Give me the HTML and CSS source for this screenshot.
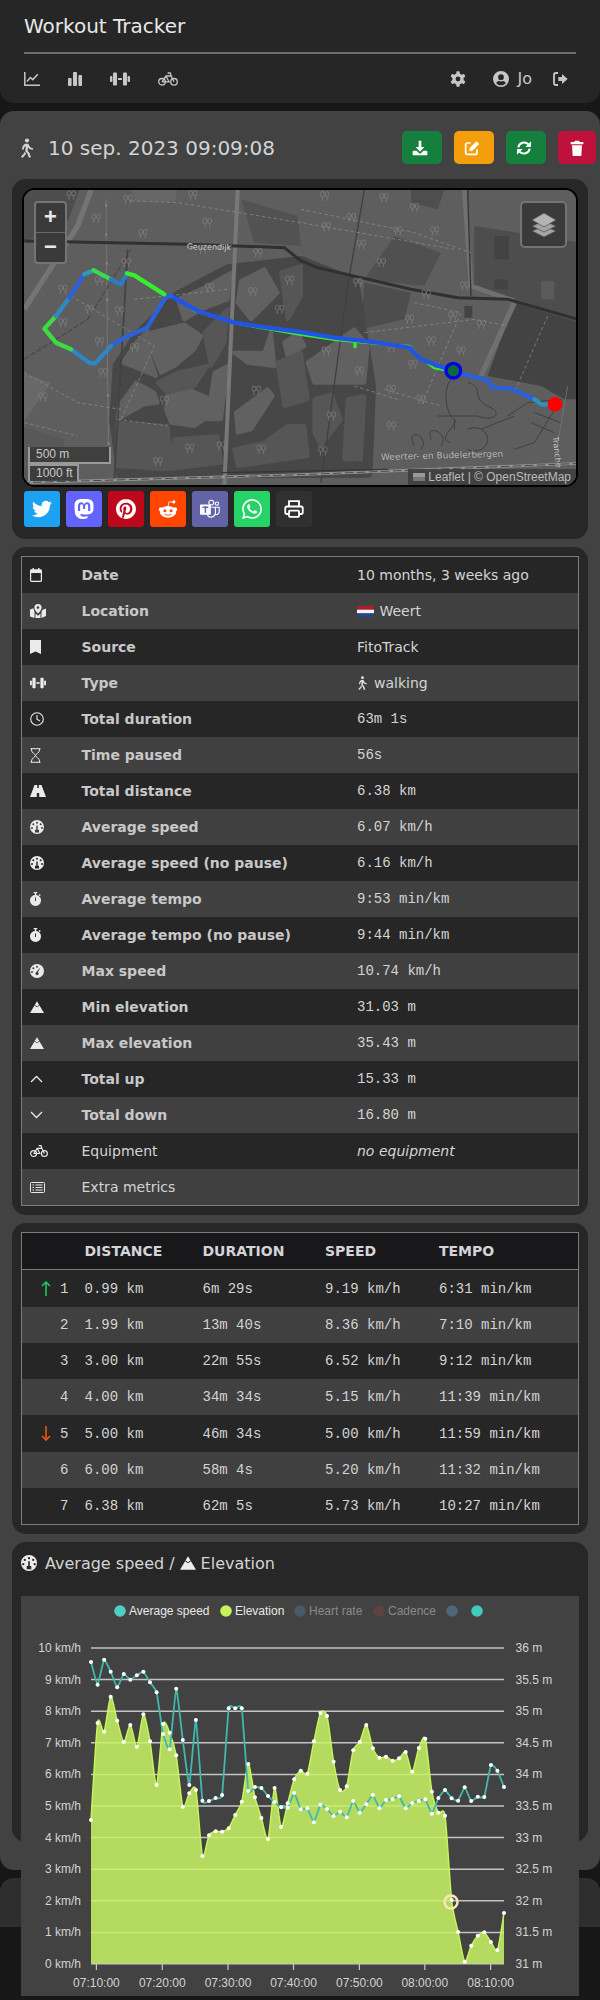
FILE: index.html
```html
<!DOCTYPE html>
<html lang="en">
<head>
<meta charset="utf-8">
<title>Workout Tracker</title>
<link rel="stylesheet" href="styles.css">
</head>
<body>
<svg class="sprite" aria-hidden="true">
  <symbol id="i-chart" viewBox="0 0 16 14"><path d="M.8 0v13.2H16" fill="none" stroke="currentColor" stroke-width="1.5"/><path d="M3 9.5 6.3 5.5 8.8 7.6 13.8 2.2" fill="none" stroke="currentColor" stroke-width="1.5"/></symbol>
  <symbol id="i-bars" viewBox="0 0 14 14"><rect y="6" width="3.6" height="8" rx="1" fill="currentColor"/><rect x="5" width="4" height="14" rx="1" fill="currentColor"/><rect x="10.4" y="3" width="3.6" height="11" rx="1" fill="currentColor"/></symbol>
  <symbol id="i-dumbbell" viewBox="0 0 20 14"><rect y="4" width="2.4" height="6" rx="1" fill="currentColor"/><rect x="3" y=".5" width="4" height="13" rx="1" fill="currentColor"/><rect x="8" y="6" width="4" height="2" fill="currentColor"/><rect x="13" y=".5" width="4" height="13" rx="1" fill="currentColor"/><rect x="17.6" y="4" width="2.4" height="6" rx="1" fill="currentColor"/></symbol>
  <symbol id="i-bike" viewBox="0 0 20 14"><g fill="none" stroke="currentColor" stroke-width="1.3"><circle cx="4" cy="9.8" r="3.3"/><circle cx="16" cy="9.8" r="3.3"/><path d="M4 9.8 8 4H13.2L16 9.8M8 4l3 5.8H4M13.2 4 12.2 1H9.6"/></g></symbol>
  <symbol id="i-gear" viewBox="0 0 24 24"><g fill="currentColor"><path fill-rule="evenodd" d="M12 3.5a8.5 8.5 0 1 0 0 17a8.5 8.5 0 1 0 0-17zM12 8.4a3.6 3.6 0 1 1 0 7.2a3.6 3.6 0 1 1 0-7.2z"/><rect x="9.5" y=".5" width="5" height="5" rx="1"/><rect x="9.5" y=".5" width="5" height="5" rx="1" transform="rotate(60 12 12)"/><rect x="9.5" y=".5" width="5" height="5" rx="1" transform="rotate(120 12 12)"/><rect x="9.5" y=".5" width="5" height="5" rx="1" transform="rotate(180 12 12)"/><rect x="9.5" y=".5" width="5" height="5" rx="1" transform="rotate(240 12 12)"/><rect x="9.5" y=".5" width="5" height="5" rx="1" transform="rotate(300 12 12)"/></g></symbol>
  <symbol id="i-user" viewBox="0 0 24 24"><path fill="currentColor" fill-rule="evenodd" d="M12 0a12 12 0 1 0 0 24a12 12 0 1 0 0-24zM12 5a4.3 4.3 0 1 1 0 8.6a4.3 4.3 0 1 1 0-8.6zM12 21.5c-3 0-5.6-1.4-7.3-3.5c.9-1.7 2.7-2.9 4.7-2.9c.6.2 1.6.5 2.6.5s2-.3 2.6-.5c2 0 3.8 1.2 4.7 2.9c-1.7 2.1-4.3 3.5-7.3 3.5z"/></symbol>
  <symbol id="i-logout" viewBox="0 0 24 24"><path d="M9 3H5.500A2.500 2.500 0 0 0 3 5.500V18.500A2.500 2.500 0 0 0 5.500 21H9" fill="none" stroke="currentColor" stroke-width="2.800"/><path fill="currentColor" d="M9.500 9H15V4.500L23.500 12 15 19.500V15H9.500Z"/></symbol>
  <symbol id="i-walk" viewBox="5 0 16 24"><g fill="currentColor"><circle cx="13" cy="3" r="2.500"/><path d="M10.500 6.800 14.500 7 17 11 20.500 12.500 19.600 14.400 15.600 12.800 14.600 11 13.600 15 16 18 17.800 23 15.300 23.800 13.600 19 10.800 15.800 11.800 10 9.800 11 8.800 14.200 6.800 13.600 8 9.300Z"/><path d="M10.200 16.500 12 18.500 10.800 20.500 7.500 24 5.800 22.300 9 19Z"/></g></symbol>
  <symbol id="i-download" viewBox="0 0 24 24"><g fill="currentColor"><path d="M10 1H14V10.500H18.500L12 17.500 5.500 10.500H10Z"/><path d="M2.500 16H7L11 20.300H13L17 16H21.500C22.500 16 23 16.800 23 17.500V22C23 22.800 22.500 23 21.500 23H2.500C1.500 23 1 22.800 1 22V17.500C1 16.800 1.500 16 2.500 16Z"/></g></symbol>
  <symbol id="i-edit" viewBox="0 0 24 24"><path d="M10 4.500H5A2.500 2.500 0 0 0 2.500 7V19A2.500 2.500 0 0 0 5 21.500H17A2.500 2.500 0 0 0 19.500 19V14" fill="none" stroke="currentColor" stroke-width="2.600"/><path fill="currentColor" d="M8.500 12 18.800 1.700 23 5.900 12.700 16.200 8 16.800Z"/></symbol>
  <symbol id="i-refresh" viewBox="0 0 24 24"><g fill="none" stroke="currentColor" stroke-width="3"><path d="M3.500 11A8.700 8.700 0 0 1 18.500 6.500"/><path d="M20.500 13A8.700 8.700 0 0 1 5.500 17.500"/></g><path fill="currentColor" d="M22.500 2V10.500H14Z"/><path fill="currentColor" d="M1.500 22V13.500H10Z"/></symbol>
  <symbol id="i-trash" viewBox="0 0 24 24"><g fill="currentColor"><path d="M2.500 3H8L9 1H15L16 3H21.500V6.500H2.500Z"/><path d="M4.500 8H19.500L18.500 24H5.500Z"/></g></symbol>
  <symbol id="i-twitter" viewBox="0 0 24 24"><path fill="currentColor" d="M23.953 4.570a10 10 0 01-2.825.775 4.958 4.958 0 002.163-2.723c-.951.555-2.005.959-3.127 1.184a4.920 4.920 0 00-8.384 4.482C7.690 8.095 4.067 6.130 1.640 3.162a4.822 4.822 0 00-.666 2.475c0 1.710.870 3.213 2.188 4.096a4.904 4.904 0 01-2.228-.616v.060a4.923 4.923 0 003.946 4.827 4.996 4.996 0 01-2.212.085 4.936 4.936 0 004.604 3.417 9.867 9.867 0 01-6.102 2.105c-.390 0-.779-.023-1.170-.067a13.995 13.995 0 007.557 2.209c9.053 0 13.998-7.496 13.998-13.985 0-.210 0-.420-.015-.630A9.935 9.935 0 0024 4.590z"/></symbol>
  <symbol id="i-mastodon" viewBox="0 0 24 24"><path fill="currentColor" d="M23.268 5.313c-.350-2.578-2.617-4.610-5.304-5.004C17.510.242 15.792 0 11.813 0h-.030C7.803 0 6.950.242 6.494.309 3.878.692 1.500 2.518.926 5.127.650 6.412.620 7.837.673 9.143c.074 1.874.088 3.745.260 5.611.118 1.240.325 2.470.620 3.680.550 2.237 2.777 4.098 4.960 4.857 2.336.792 4.849.923 7.256.380.265-.061.527-.132.786-.213.585-.184 1.270-.390 1.774-.753a.057.057 0 0 0 .023-.043v-1.809a.052.052 0 0 0-.020-.041.053.053 0 0 0-.046-.010 20.282 20.282 0 0 1-4.709.545c-2.730 0-3.463-1.284-3.674-1.818a5.593 5.593 0 0 1-.319-1.433.053.053 0 0 1 .066-.054c1.517.363 3.072.546 4.632.546.376 0 .750 0 1.125-.010 1.570-.044 3.224-.124 4.768-.422.038-.008.077-.015.110-.024 2.435-.464 4.753-1.920 4.989-5.604.008-.145.030-1.520.030-1.670.002-.512.167-3.630-.024-5.545zm-3.748 9.195h-2.561V8.290c0-1.309-.550-1.976-1.670-1.976-1.230 0-1.846.790-1.846 2.350v3.403h-2.546V8.663c0-1.560-.617-2.350-1.848-2.350-1.112 0-1.668.668-1.670 1.977v6.218H4.822V8.102c0-1.310.337-2.350 1.011-3.120.696-.770 1.608-1.164 2.740-1.164 1.311 0 2.302.500 2.962 1.498l.638 1.060.638-1.060c.660-.999 1.650-1.498 2.960-1.498 1.130 0 2.043.395 2.740 1.164.675.770 1.012 1.810 1.012 3.120z"/></symbol>
  <symbol id="i-pinterest" viewBox="0 0 24 24"><path fill="currentColor" d="M12.017 0C5.396 0 .029 5.367.029 11.987c0 5.079 3.158 9.417 7.618 11.162-.105-.949-.199-2.403.041-3.439.219-.937 1.406-5.957 1.406-5.957s-.359-.720-.359-1.781c0-1.663.967-2.911 2.168-2.911 1.024 0 1.518.769 1.518 1.688 0 1.029-.653 2.567-.992 3.992-.285 1.193.600 2.165 1.775 2.165 2.128 0 3.768-2.245 3.768-5.487 0-2.861-2.063-4.869-5.008-4.869-3.410 0-5.409 2.562-5.409 5.199 0 1.033.394 2.143.889 2.741.099.120.112.225.085.345-.090.375-.293 1.199-.334 1.363-.053.225-.172.271-.401.165-1.495-.690-2.433-2.878-2.433-4.646 0-3.776 2.748-7.252 7.920-7.252 4.158 0 7.392 2.967 7.392 6.923 0 4.135-2.607 7.462-6.233 7.462-1.214 0-2.354-.629-2.758-1.379l-.749 2.848c-.269 1.045-1.004 2.352-1.498 3.146 1.123.345 2.306.535 3.550.535 6.607 0 11.985-5.365 11.985-11.987C23.970 5.390 18.592.026 11.985.026L12.017 0z"/></symbol>
  <symbol id="i-reddit" viewBox="0 0 24 24"><g fill="currentColor"><circle cx="3.500" cy="12.500" r="2.500"/><circle cx="20.500" cy="12.500" r="2.500"/><ellipse cx="12" cy="15.500" rx="9.800" ry="7"/><circle cx="19" cy="3.500" r="1.900"/></g><path d="M12 9 13.300 3.300 18.500 4" fill="none" stroke="currentColor" stroke-width="1"/><circle cx="8.300" cy="14" r="1.800" fill="#ff4500"/><circle cx="15.700" cy="14" r="1.800" fill="#ff4500"/><path d="M8 18.300c2.300 1.500 5.700 1.500 8 0" fill="none" stroke="#ff4500" stroke-width="1.100"/></symbol>
  <symbol id="i-teams" viewBox="0 0 24 24"><g fill="none" stroke="currentColor" stroke-width="1.300"><circle cx="13.500" cy="4.300" r="2.900"/><circle cx="20.300" cy="5.500" r="2"/><path d="M13.500 9.800H18.500V16.500A5.300 5.300 0 0 1 8.800 19.300"/><path d="M18.500 9.800H23V15.500A3.500 3.500 0 0 1 18 18.300"/></g><rect x="0" y="6.500" width="13" height="12.500" rx="1" fill="currentColor"/><rect x="3" y="9" width="7" height="1.800" fill="#6264a7"/><rect x="5.600" y="9" width="1.800" height="7.500" fill="#6264a7"/></symbol>
  <symbol id="i-whatsapp" viewBox="0 0 24 24"><path fill="currentColor" d="M17.472 14.382c-.297-.149-1.758-.867-2.030-.967-.273-.099-.471-.148-.670.150-.197.297-.767.966-.940 1.164-.173.199-.347.223-.644.075-.297-.150-1.255-.463-2.390-1.475-.883-.788-1.480-1.761-1.653-2.059-.173-.297-.018-.458.130-.606.134-.133.298-.347.446-.520.149-.174.198-.298.298-.497.099-.198.050-.371-.025-.520-.075-.149-.669-1.612-.916-2.207-.242-.579-.487-.500-.669-.510-.173-.008-.371-.010-.570-.010-.198 0-.520.074-.792.372-.272.297-1.040 1.016-1.040 2.479 0 1.462 1.065 2.875 1.213 3.074.149.198 2.096 3.200 5.077 4.487.709.306 1.262.489 1.694.625.712.227 1.360.195 1.871.118.571-.085 1.758-.719 2.006-1.413.248-.694.248-1.289.173-1.413-.074-.124-.272-.198-.570-.347m-5.421 7.403h-.004a9.870 9.870 0 01-5.031-1.378l-.361-.214-3.741.982.998-3.648-.235-.374a9.860 9.860 0 01-1.510-5.260c.001-5.450 4.436-9.884 9.888-9.884 2.640 0 5.122 1.030 6.988 2.898a9.825 9.825 0 012.893 6.994c-.003 5.450-4.437 9.884-9.885 9.884m8.413-18.297A11.815 11.815 0 0012.050 0C5.495 0 .160 5.335.157 11.892c0 2.096.547 4.142 1.588 5.945L.057 24l6.305-1.654a11.882 11.882 0 005.683 1.448h.005c6.554 0 11.890-5.335 11.893-11.893a11.821 11.821 0 00-3.480-8.413z"/></symbol>
  <symbol id="i-print" viewBox="0 0 24 24"><g fill="none" stroke="currentColor" stroke-width="2.200"><path d="M6 9V2.500H18V9"/><path d="M6 18H3.500A2 2 0 0 1 1.500 16V11A2 2 0 0 1 3.500 9H20.500A2 2 0 0 1 22.500 11V16A2 2 0 0 1 20.500 18H18"/><rect x="6" y="14" width="12" height="7.500" rx="1"/></g></symbol>
  <symbol id="i-calendar" viewBox="0 0 12 14"><rect x=".6" y="2" width="10.800" height="11.400" rx="1" fill="none" stroke="currentColor" stroke-width="1.200"/><rect y="1.500" width="12" height="3.500" rx="1" fill="currentColor"/><rect x="2.500" width="1.400" height="2" fill="currentColor"/><rect x="8.100" width="1.400" height="2" fill="currentColor"/></symbol>
  <symbol id="i-map" viewBox="0 0 16 14"><path fill="currentColor" fill-rule="evenodd" d="M8 0a3.600 3.600 0 0 1 3.600 3.600c0 2-2.400 5-3.600 6c-1.200-1-3.600-4-3.600-6A3.600 3.600 0 0 1 8 0zM8 2.300a1.300 1.300 0 1 0 0 2.600a1.300 1.300 0 1 0 0-2.600z"/><path fill="currentColor" d="M0 5.500 3.500 4.200 4.500 8V14L0 12.500ZM5.500 9.500 8 11.800 10.500 9.500V14H5.500ZM12.300 6 16 4.500V12L11.500 14V8Z"/></symbol>
  <symbol id="i-bookmark" viewBox="0 0 11 14"><path fill="currentColor" d="M0 0H11V14L5.500 11.500 0 14Z"/></symbol>
  <symbol id="i-clock" viewBox="0 0 14 14"><circle cx="7" cy="7" r="6.300" fill="none" stroke="currentColor" stroke-width="1.100"/><path d="M7 3V7.200L9.800 9" fill="none" stroke="currentColor" stroke-width="1.100"/></symbol>
  <symbol id="i-hourglass" viewBox="0 0 10 15"><path d="M0 .7H10M0 14.300H10M1 .7V2C1 5 5 6 5 7.500S1 10 1 13V14.300M9 .7V2C9 5 5 6 5 7.500S9 10 9 13V14.300" fill="none" stroke="currentColor" stroke-width="1"/></symbol>
  <symbol id="i-road" viewBox="0 0 16 12"><path fill="currentColor" d="M4.500 0H7.200V3H8.800V0H11.500L16 12H9.200V8H6.800V12H0Z"/></symbol>
  <symbol id="i-tacho" viewBox="0 0 14 14"><path fill="currentColor" fill-rule="evenodd" d="M7 0a7 7 0 1 0 0 14a7 7 0 1 0 0-14zM7 1.800a1 1 0 1 1 0 2a1 1 0 1 1 0-2zM3.300 3.300a1 1 0 1 1 0 2a1 1 0 1 1 0-2zM10.700 3.300a1 1 0 1 1 0 2a1 1 0 1 1 0-2zM2 7a1 1 0 1 1 0 2a1 1 0 1 1 0-2zM12 7a1 1 0 1 1 0 2a1 1 0 1 1 0-2zM6.300 5.500H7.700V9.700H9V12.500H5V9.700H6.300Z"/></symbol>
  <symbol id="i-stopwatch" viewBox="0 0 11 14"><path fill="currentColor" fill-rule="evenodd" d="M3.700 0H7.300V1.200H6.200V3A5.500 5.500 0 1 1 4.800 3V1.200H3.700ZM5 5.500V9H6V5.500Z"/><rect x="9" y="2.300" width="1.500" height="1.500" transform="rotate(45 9.700 3)" fill="currentColor"/></symbol>
  <symbol id="i-gauge" viewBox="0 0 14 14"><path fill="currentColor" fill-rule="evenodd" d="M7 0a7 7 0 1 0 0 14a7 7 0 1 0 0-14zM7 1.800a1 1 0 1 1 0 2a1 1 0 1 1 0-2zM3.300 3.300a1 1 0 1 1 0 2a1 1 0 1 1 0-2zM2 7a1 1 0 1 1 0 2a1 1 0 1 1 0-2zM10.600 3 8 8.200A1.600 1.600 0 1 1 6.400 8Z"/></symbol>
  <symbol id="i-mountain" viewBox="0 0 14 12"><path fill="currentColor" fill-rule="evenodd" d="M7 .2 14 12H0ZM4.900 3.900 7 5.400 9.100 3.900 9.500 4.500 7 6.300 4.500 4.500Z"/></symbol>
  <symbol id="i-up" viewBox="0 0 13 8"><path d="M1 7 6.500 1.500 12 7" fill="none" stroke="currentColor" stroke-width="1.300"/></symbol>
  <symbol id="i-down" viewBox="0 0 13 8"><path d="M1 1 6.500 6.500 12 1" fill="none" stroke="currentColor" stroke-width="1.300"/></symbol>
  <symbol id="i-list" viewBox="0 0 15 11"><rect x=".5" y=".5" width="14" height="10" rx="1" fill="none" stroke="currentColor"/><path d="M2.500 3H4M2.500 5.500H4M2.500 8H4M5.500 3H12.500M5.500 5.500H12.500M5.500 8H12.500" stroke="currentColor"/></symbol>
  <symbol id="i-tree" viewBox="0 0 30 30"><g fill="none" stroke="currentColor" stroke-width="2"><ellipse cx="9" cy="10" rx="6" ry="8"/><ellipse cx="23" cy="10" rx="6" ry="8"/><path d="M9 18V29M23 18V29"/></g></symbol>
</svg>

<header class="nav">
  <h1 class="brand">Workout Tracker</h1>
  <hr class="nav-rule">
  <nav class="nav-row">
    <div class="nav-group">
      <svg class="ic w16 h14"><use href="#i-chart"/></svg>
      <svg class="ic w14 h14"><use href="#i-bars"/></svg>
      <svg class="ic w20 h14"><use href="#i-dumbbell"/></svg>
      <svg class="ic w20 h14"><use href="#i-bike"/></svg>
    </div>
    <div class="nav-group nav-right">
      <svg class="ic w16 h16"><use href="#i-gear"/></svg>
      <span class="user"><svg class="ic w16 h16"><use href="#i-user"/></svg><span class="user-name">Jo</span></span>
      <svg class="ic w16 h16"><use href="#i-logout"/></svg>
    </div>
  </nav>
</header>

<main class="main">
  <div class="title-row">
    <div class="workout-title"><svg class="ic w14 h20"><use href="#i-walk"/></svg><span>10 sep. 2023 09:09:08</span></div>
    <div class="actions">
      <span class="act act-green"><svg class="ic w16 h16"><use href="#i-download"/></svg></span>
      <span class="act act-amber"><svg class="ic w16 h16"><use href="#i-edit"/></svg></span>
      <span class="act act-green"><svg class="ic w16 h16"><use href="#i-refresh"/></svg></span>
      <span class="act act-red"><svg class="ic w16 h16"><use href="#i-trash"/></svg></span>
    </div>
  </div>

  <section class="card card-map">
    <div class="map">
      <svg class="map-art" viewBox="12 12 1656 885" width="554" height="295">
        <rect x="0" y="0" width="1700" height="920" fill="#5e5e5e"/>
        <path d="M0 0H180L135 120 0 170Z" fill="#4d4d4d"/>
        <path d="M0 560 90 590 0 720Z" fill="#686868"/>
        <path d="M0 720 130 760 100 900H0Z" fill="#585858"/>
        <path d="M330 12H470L460 50 340 45Z" fill="#666"/>
        <path d="M660 40 830 90 840 180 700 170Z" fill="#525252"/>
        <path d="M1170 12H1270L1250 70 1170 50Z" fill="#4e4e4e"/>
        <path d="M1120 150 1260 200 1210 300 1030 280Z" fill="#505050"/>
        <path d="M1030 290 1170 320 1150 400 1020 430Z" fill="#4d4d4d"/>
        <path d="M840 360 1020 350 1010 430 840 430Z" fill="#525252"/>
        <path d="M1360 120 1680 170V400L1480 340 1360 300Z" fill="#4d4d4d"/>
        <path d="M1480 350 1680 410V640L1630 640 1560 600 1400 570Z" fill="#434343"/>
        <path d="M290 540 350 450 470 330 620 250 840 225 1000 290 1050 600 1040 860 300 862 280 700Z" fill="#474747" stroke="#474747" stroke-width="30" stroke-linejoin="round"/>
        <g class="blob blob-light">
          <path d="M305 530 345 470 380 435 385 510 405 570 345 545Z"/>
          <path d="M390 440 490 415 540 450 520 490 460 540 420 560 395 500Z"/>
          <path d="M470 340 560 300 630 260 620 340 540 370 490 400Z"/>
          <path d="M295 660 345 590 400 620 410 650 370 655 290 700Z"/>
          <path d="M440 620 490 605 570 640 580 680 520 720 450 710 435 670Z"/>
          <path d="M645 680 740 610 755 630 690 730 650 740Z"/>
          <path d="M660 285 730 250 770 320 690 400 650 350Z"/>
          <path d="M580 560 620 540 600 700 560 700Z"/>
          <path d="M640 500 730 500 750 440 760 540 680 530Z"/>
          <path d="M860 530 1000 430 1040 480 1030 590 880 590Z"/>
          <path d="M790 470 830 440 850 480 800 510Z"/>
        </g>
        <g class="blob blob-mid">
          <path d="M550 440 620 370 610 470 570 540Z"/>
          <path d="M780 260 840 240 840 330 800 400Z"/>
          <path d="M290 710 440 720 450 830 430 850 290 840Z"/>
          <path d="M460 760 590 750 600 830 440 850Z"/>
          <path d="M640 790 730 770 800 720 850 720 860 810 650 840Z"/>
          <path d="M770 530 840 500 860 640 790 660Z"/>
          <path d="M410 590 470 560 560 540 520 600 440 620Z"/>
          <path d="M880 640 930 625 960 700 900 780 880 740Z"/>
          <path d="M980 640 1030 630 1020 820 970 820Z"/>
        </g>
        <g fill="none">
          <path d="M210 12 170 120 10 370" stroke="#747474" stroke-width="16"/>
          <path d="M1330 12 1350 300 1480 345" stroke="#707070" stroke-width="14"/>
          <path d="M1480 350 1380 570" stroke="#707070" stroke-width="16"/>
          <path d="M650 12 610 900" stroke="#787878" stroke-width="12"/>
          <path d="M255 40 262 780" stroke="#828282" stroke-width="2"/>
          <path d="M320 190 280 880" stroke="#424242" stroke-width="5"/>
          <path d="M1030 12 980 300 900 890" stroke="#404040" stroke-width="4"/>
          <path d="M1340 12 1350 330" stroke="#363636" stroke-width="4"/>
          <path d="M10 165 500 175 790 185 840 225 890 245 1170 310 1310 335 1460 340 1670 400" stroke="#303030" stroke-width="9"/>
          <path d="M10 520 200 400 330 190" stroke="#404040" stroke-width="3" stroke-dasharray="16 6"/>
          <path d="M0 890 840 866 1680 832" stroke="#959595" stroke-width="8"/>
          <path d="M0 890 840 866 1680 832" stroke="#484848" stroke-width="3" stroke-dasharray="26 10"/>
          <path d="M600 860 1100 850" stroke="#363636" stroke-width="4"/>
          <g stroke="#929292" stroke-width="2" stroke-dasharray="10 8">
            <path d="M10 560 170 650 300 670"/>
            <path d="M150 330 400 480 300 700"/>
            <path d="M330 45 470 50 840 110 1300 190"/>
            <path d="M840 70 1180 140 1350 200"/>
            <path d="M1180 350 1320 380 1200 660"/>
            <path d="M1030 440 1360 400 1460 420"/>
            <path d="M1090 610 1260 660"/>
            <path d="M1580 390 1480 620"/>
            <path d="M10 710 170 750"/>
            <path d="M290 700 440 720"/>
            <path d="M1000 600 1130 640"/>
            <path d="M340 340 620 310"/>
          </g>
          <g stroke="#404040" stroke-width="3">
            <path d="M1290 580C1260 620 1280 690 1300 700S1240 760 1290 770"/>
            <path d="M1340 590C1390 600 1350 640 1400 660S1420 710 1370 690"/>
            <path d="M1340 730A40 35 0 1 1 1340 790"/>
            <path d="M1250 690H1370M1300 700V730M1380 730 1480 690"/>
            <path d="M1180 780C1150 720 1230 750 1200 790M1230 760C1210 710 1290 740 1260 780"/>
            <path d="M1460 690 1520 650 1620 640 1540 770 1480 790"/>
            <path d="M1540 680 1620 710M1530 710 1600 740"/>
            <path d="M1640 600 1600 830" stroke="#7c7c7c" stroke-width="2"/>
          </g>
        </g>
        <g fill="#434343">
          <rect x="1330" y="360" width="24" height="35"/>
          <rect x="1420" y="150" width="44" height="70"/>
          <rect x="1420" y="280" width="40" height="30"/>
          <rect x="1560" y="285" width="40" height="55" fill="#5a5a5a"/>
        </g>
        <g fill="#808080">
          <rect x="252" y="55" width="7" height="7"/><rect x="252" y="142" width="7" height="7"/><rect x="254" y="229" width="7" height="7"/><rect x="255" y="337" width="7" height="7"/><rect x="256" y="481" width="7" height="7"/><rect x="258" y="625" width="7" height="7"/><rect x="259" y="769" width="7" height="7"/>
        </g>
        <g class="trees">
          <use href="#i-tree" x="110" y="295" width="30" height="30"/><use href="#i-tree" x="210" y="82" width="30" height="30"/><use href="#i-tree" x="135" y="12" width="30" height="30"/><use href="#i-tree" x="305" y="25" width="30" height="30"/><use href="#i-tree" x="350" y="128" width="30" height="30"/><use href="#i-tree" x="543" y="95" width="30" height="30"/><use href="#i-tree" x="500" y="12" width="30" height="30"/><use href="#i-tree" x="300" y="215" width="30" height="30"/><use href="#i-tree" x="695" y="185" width="30" height="30"/><use href="#i-tree" x="550" y="290" width="30" height="30"/><use href="#i-tree" x="680" y="302" width="30" height="30"/><use href="#i-tree" x="760" y="355" width="30" height="30"/><use href="#i-tree" x="110" y="395" width="30" height="30"/><use href="#i-tree" x="190" y="355" width="30" height="30"/><use href="#i-tree" x="220" y="452" width="30" height="30"/><use href="#i-tree" x="325" y="470" width="30" height="30"/><use href="#i-tree" x="50" y="618" width="30" height="30"/><use href="#i-tree" x="230" y="545" width="30" height="30"/><use href="#i-tree" x="415" y="628" width="30" height="30"/><use href="#i-tree" x="690" y="598" width="30" height="30"/><use href="#i-tree" x="585" y="765" width="30" height="30"/><use href="#i-tree" x="705" y="775" width="30" height="30"/><use href="#i-tree" x="395" y="812" width="30" height="30"/><use href="#i-tree" x="490" y="772" width="30" height="30"/><use href="#i-tree" x="280" y="360" width="30" height="30"/><use href="#i-tree" x="220" y="270" width="30" height="30"/><use href="#i-tree" x="530" y="175" width="30" height="30"/><use href="#i-tree" x="790" y="268" width="30" height="30"/>
          <use href="#i-tree" x="895" y="15" width="30" height="30"/><use href="#i-tree" x="1073" y="20" width="30" height="30"/><use href="#i-tree" x="1165" y="50" width="30" height="30"/><use href="#i-tree" x="975" y="80" width="30" height="30"/><use href="#i-tree" x="900" y="107" width="30" height="30"/><use href="#i-tree" x="1115" y="120" width="30" height="30"/><use href="#i-tree" x="1225" y="120" width="30" height="30"/><use href="#i-tree" x="1005" y="160" width="30" height="30"/><use href="#i-tree" x="1065" y="215" width="30" height="30"/><use href="#i-tree" x="995" y="275" width="30" height="30"/><use href="#i-tree" x="1315" y="285" width="30" height="30"/><use href="#i-tree" x="1200" y="310" width="30" height="30"/><use href="#i-tree" x="1150" y="385" width="30" height="30"/><use href="#i-tree" x="1280" y="375" width="30" height="30"/><use href="#i-tree" x="1365" y="400" width="30" height="30"/><use href="#i-tree" x="1215" y="450" width="30" height="30"/><use href="#i-tree" x="1305" y="480" width="30" height="30"/><use href="#i-tree" x="1095" y="470" width="30" height="30"/><use href="#i-tree" x="1160" y="520" width="30" height="30"/><use href="#i-tree" x="900" y="480" width="30" height="30"/><use href="#i-tree" x="1000" y="540" width="30" height="30"/><use href="#i-tree" x="1095" y="595" width="30" height="30"/><use href="#i-tree" x="1185" y="625" width="30" height="30"/><use href="#i-tree" x="915" y="675" width="30" height="30"/><use href="#i-tree" x="1095" y="705" width="30" height="30"/><use href="#i-tree" x="890" y="780" width="30" height="30"/>
        </g>
        <g fill="none" stroke-linejoin="round" stroke-linecap="round">
          <polyline points="450,330 520,375 640,412 740,430 840,447 940,462 1070,474 1165,479 1200,517 1240,547 1290,556" stroke="#36ee2e" stroke-width="6"/>
          <path d="M1002 462V482" stroke="#36ee2e" stroke-width="10"/>
          <polyline points="1297,554 1240,535 1200,520 1165,485 1070,470 940,455 840,438 740,425 640,410 530,375 450,330" stroke="#2254e4" stroke-width="13"/>
          <polyline points="450,330 435,332 378,425 310,455 270,480" stroke="#2b62dc" stroke-width="13"/>
          <polyline points="270,480 222,533 205,530 150,490" stroke="#2f86c6" stroke-width="13"/>
          <polyline points="150,490 105,470 70,428 105,390" stroke="#3bdc42" stroke-width="13"/>
          <polyline points="105,390 145,335" stroke="#2f8ac4" stroke-width="13"/>
          <polyline points="145,335 190,265" stroke="#2b62dc" stroke-width="13"/>
          <polyline points="190,265 218,253" stroke="#2f9ab0" stroke-width="13"/>
          <polyline points="218,253 270,280" stroke="#37dc50" stroke-width="13"/>
          <polyline points="270,280 300,295 318,262" stroke="#2b7cc8" stroke-width="13"/>
          <polyline points="318,262 340,268 430,325" stroke="#36ee2e" stroke-width="13"/>
          <polyline points="1297,554 1330,565 1400,583 1415,605 1470,608 1540,640" stroke="#2b5fdc" stroke-width="13"/>
          <polyline points="1540,640 1560,655 1602,655" stroke="#2f90be" stroke-width="13"/>
        </g>
        <circle cx="1297" cy="554" r="22" fill="#0c6b3a" stroke="#0000e6" stroke-width="10"/>
        <circle cx="1602" cy="655" r="22" fill="#ff0000"/>
        <text class="map-label" x="497" y="190" transform="rotate(1 497 190)">Geuzendijk</text>
        <text class="map-label map-label-dim" x="1080" y="822" transform="rotate(-1.500 1080 822)">Weerter- en Budelerbergen</text>
        <text class="map-label" x="1595" y="752" transform="rotate(84 1595 752)">Tranche</text>
      </svg>
      <div class="zoom-ctl"><span class="zoom-btn">+</span><span class="zoom-btn zoom-btn-last">−</span></div>
      <div class="layers-ctl">
        <svg viewBox="0 0 26 26" width="26" height="26"><g stroke="#4e4e4e" stroke-width=".7" fill="#a4a4a4"><path d="M13 14 25 19 13 25 1 19Z"/><path d="M13 9 25 14 13 20 1 14Z"/><path d="M13 1 25 8 13 15 1 8Z" fill="#b4b4b4"/></g></svg>
      </div>
      <div class="scale">
        <div class="scale-m">500 m</div>
        <div class="scale-ft">1000 ft</div>
      </div>
      <div class="attribution"><svg viewBox="0 0 12 8" width="12" height="8"><rect width="12" height="4" fill="#999"/><rect y="4" width="12" height="4" fill="#777"/></svg><span>Leaflet | © OpenStreetMap</span></div>
    </div>
    <div class="socials">
      <span class="soc soc-twitter"><svg class="ic w20 h20"><use href="#i-twitter"/></svg></span>
      <span class="soc soc-mastodon"><svg class="ic w20 h20"><use href="#i-mastodon"/></svg></span>
      <span class="soc soc-pinterest"><svg class="ic w20 h20"><use href="#i-pinterest"/></svg></span>
      <span class="soc soc-reddit"><svg class="ic w20 h20"><use href="#i-reddit"/></svg></span>
      <span class="soc soc-teams"><svg class="ic w20 h20"><use href="#i-teams"/></svg></span>
      <span class="soc soc-whatsapp"><svg class="ic w20 h20"><use href="#i-whatsapp"/></svg></span>
      <span class="soc soc-print"><svg class="ic w20 h20"><use href="#i-print"/></svg></span>
    </div>
  </section>

  <section class="card">
    <table class="stats">
      <colgroup><col class="c-ic"><col class="c-label"><col></colgroup>
      <tr><td><svg class="ic w12 h14"><use href="#i-calendar"/></svg></td><th>Date</th><td>10 months, 3 weeks ago</td></tr>
      <tr><td><svg class="ic w16 h14"><use href="#i-map"/></svg></td><th>Location</th><td><svg class="flag" viewBox="0 0 17 11" width="17" height="11"><rect width="17" height="3.700" fill="#ae1c28"/><rect y="3.700" width="17" height="3.700" fill="#f4f4f4"/><rect y="7.400" width="17" height="3.600" fill="#21468b"/></svg> Weert</td></tr>
      <tr><td><svg class="ic w11 h14"><use href="#i-bookmark"/></svg></td><th>Source</th><td>FitoTrack</td></tr>
      <tr><td><svg class="ic w16 h12"><use href="#i-dumbbell"/></svg></td><th>Type</th><td><svg class="ic w11 h14 type-ic"><use href="#i-walk"/></svg>walking</td></tr>
      <tr><td><svg class="ic w14 h14"><use href="#i-clock"/></svg></td><th>Total duration</th><td class="mono">63m 1s</td></tr>
      <tr><td><svg class="ic w11 h15"><use href="#i-hourglass"/></svg></td><th>Time paused</th><td class="mono">56s</td></tr>
      <tr><td><svg class="ic w16 h12"><use href="#i-road"/></svg></td><th>Total distance</th><td class="mono">6.38 km</td></tr>
      <tr><td><svg class="ic w14 h14"><use href="#i-tacho"/></svg></td><th>Average speed</th><td class="mono">6.07 km/h</td></tr>
      <tr><td><svg class="ic w14 h14"><use href="#i-tacho"/></svg></td><th>Average speed (no pause)</th><td class="mono">6.16 km/h</td></tr>
      <tr><td><svg class="ic w11 h14"><use href="#i-stopwatch"/></svg></td><th>Average tempo</th><td class="mono">9:53 min/km</td></tr>
      <tr><td><svg class="ic w11 h14"><use href="#i-stopwatch"/></svg></td><th>Average tempo (no pause)</th><td class="mono">9:44 min/km</td></tr>
      <tr><td><svg class="ic w14 h14"><use href="#i-gauge"/></svg></td><th>Max speed</th><td class="mono">10.74 km/h</td></tr>
      <tr><td><svg class="ic w14 h12"><use href="#i-mountain"/></svg></td><th>Min elevation</th><td class="mono">31.03 m</td></tr>
      <tr><td><svg class="ic w14 h12"><use href="#i-mountain"/></svg></td><th>Max elevation</th><td class="mono">35.43 m</td></tr>
      <tr><td><svg class="ic w13 h8"><use href="#i-up"/></svg></td><th>Total up</th><td class="mono">15.33 m</td></tr>
      <tr><td><svg class="ic w13 h8"><use href="#i-down"/></svg></td><th>Total down</th><td class="mono">16.80 m</td></tr>
      <tr><td><svg class="ic w18 h14"><use href="#i-bike"/></svg></td><td>Equipment</td><td><em>no equipment</em></td></tr>
      <tr><td><svg class="ic w15 h11"><use href="#i-list"/></svg></td><td>Extra metrics</td><td></td></tr>
    </table>
  </section>

  <section class="card">
    <table class="splits">
      <colgroup><col class="s1"><col class="s2"><col class="s3"><col class="s4"><col></colgroup>
      <thead><tr><th></th><th>Distance</th><th>Duration</th><th>Speed</th><th>Tempo</th></tr></thead>
      <tbody>
        <tr class="tall"><td class="num"><svg class="arrow arrow-up" viewBox="0 0 10 15" width="10" height="15"><path d="M5 15V1M1 5 5 1 9 5" fill="none" stroke="currentColor" stroke-width="1.600"/></svg>1</td><td>0.99 km</td><td>6m 29s</td><td>9.19 km/h</td><td>6:31 min/km</td></tr>
        <tr><td class="num">2</td><td>1.99 km</td><td>13m 40s</td><td>8.36 km/h</td><td>7:10 min/km</td></tr>
        <tr><td class="num">3</td><td>3.00 km</td><td>22m 55s</td><td>6.52 km/h</td><td>9:12 min/km</td></tr>
        <tr><td class="num">4</td><td>4.00 km</td><td>34m 34s</td><td>5.15 km/h</td><td>11:39 min/km</td></tr>
        <tr class="tall"><td class="num"><svg class="arrow arrow-down" viewBox="0 0 10 15" width="10" height="15"><path d="M5 0V14M1 10 5 14 9 10" fill="none" stroke="currentColor" stroke-width="1.600"/></svg>5</td><td>5.00 km</td><td>46m 34s</td><td>5.00 km/h</td><td>11:59 min/km</td></tr>
        <tr><td class="num">6</td><td>6.00 km</td><td>58m 4s</td><td>5.20 km/h</td><td>11:32 min/km</td></tr>
        <tr><td class="num">7</td><td>6.38 km</td><td>62m 5s</td><td>5.73 km/h</td><td>10:27 min/km</td></tr>
      </tbody>
    </table>
  </section>

  <section class="card card-chart">
    <h2 class="chart-title"><svg class="ic w16 h16"><use href="#i-tacho"/></svg><span>Average speed /</span><svg class="ic w16 h14"><use href="#i-mountain"/></svg><span>Elevation</span></h2>
    <div class="chart">
      <svg id="chart" viewBox="0 0 558 400" width="558" height="400">
        <g class="legend">
          <circle cx="99" cy="15" r="5.800" fill="#4dd0c4"/><text x="108" y="19">Average speed</text>
          <circle cx="205" cy="15" r="5.800" fill="#c6f45a"/><text x="214" y="19">Elevation</text>
          <circle cx="279" cy="15" r="5.800" fill="#465a68"/><text class="off" x="288" y="19">Heart rate</text>
          <circle cx="358" cy="15" r="5.800" fill="#5a4444"/><text class="off" x="367" y="19">Cadence</text>
          <circle cx="431" cy="15" r="5.800" fill="#4f6878"/>
          <circle cx="456" cy="15" r="5.800" fill="#43c8bc"/>
        </g>
        <g class="grid">
          <path d="M70 52H483M70 83.600H483M70 115.200H483M70 146.800H483M70 178.400H483M70 210H483M70 241.600H483M70 273.200H483M70 304.800H483M70 336.400H483"/>
        </g>
        <g class="y-left">
          <text x="60" y="56">10 km/h</text><text x="60" y="87.600">9 km/h</text><text x="60" y="119.200">8 km/h</text><text x="60" y="150.800">7 km/h</text><text x="60" y="182.400">6 km/h</text><text x="60" y="214">5 km/h</text><text x="60" y="245.600">4 km/h</text><text x="60" y="277.200">3 km/h</text><text x="60" y="308.800">2 km/h</text><text x="60" y="340.400">1 km/h</text><text x="60" y="372">0 km/h</text>
        </g>
        <g class="y-right">
          <text x="494.500" y="56">36 m</text><text x="494.500" y="87.600">35.5 m</text><text x="494.500" y="119.200">35 m</text><text x="494.500" y="150.800">34.5 m</text><text x="494.500" y="182.400">34 m</text><text x="494.500" y="214">33.5 m</text><text x="494.500" y="245.600">33 m</text><text x="494.500" y="277.200">32.5 m</text><text x="494.500" y="308.800">32 m</text><text x="494.500" y="340.400">31.5 m</text><text x="494.500" y="372">31 m</text>
        </g>
        <path id="elev-area" class="elev-area"/>
        <path id="elev-line" class="elev-line"/>
        <path class="axis" d="M70 368H483M75.400 368V374M141.300 368V374M207 368V374M272.500 368V374M338.400 368V374M403.800 368V374M469.600 368V374"/>
        <g class="x-labels">
          <text x="75.400" y="391">07:10:00</text><text x="141.300" y="391">07:20:00</text><text x="207" y="391">07:30:00</text><text x="272.500" y="391">07:40:00</text><text x="338.400" y="391">07:50:00</text><text x="403.800" y="391">08:00:00</text><text x="469.600" y="391">08:10:00</text>
        </g>
        <path id="speed-line" class="speed-line"/>
        <g id="points"></g>
        <circle class="hover-ring" cx="430" cy="306" r="6.500"/>
      </svg>
    </div>
  </section>
</main>
<footer class="footer"></footer>
<script src="chart.js"></script>
</body>
</html>
```
FILE: styles.css
```css
* { box-sizing: border-box; }
html, body { margin: 0; padding: 0; }
body {
  background: #171717;
  color: #d4d4d4;
  font-family: "DejaVu Sans", sans-serif;
  font-size: 14px;
  width: 600px;
  height: 2000px;
  overflow: hidden;
}
.sprite { position: absolute; width: 0; height: 0; overflow: hidden; }
.ic { display: block; color: inherit; flex: none; }
.w11 { width: 11px; } .w12 { width: 12px; } .w13 { width: 13px; } .w14 { width: 14px; } .w15 { width: 15px; }
.w16 { width: 16px; } .w18 { width: 18px; } .w20 { width: 20px; }
.h8 { height: 8px; } .h11 { height: 11px; } .h12 { height: 12px; } .h14 { height: 14px; } .h15 { height: 15px; }
.h16 { height: 16px; } .h20 { height: 20px; }

.nav {
  background: #262626;
  height: 103px;
  border-radius: 0 0 14px 14px;
  padding-top: 14px;
}
.brand {
  margin: 0 0 0 24px;
  font-size: 20px;
  font-weight: 400;
  line-height: 24px;
  color: #e8e8e8;
}
.nav-rule { margin: 14px 24px 0; border: 0; height: 2px; background: #6e6e6e; }
.nav-row {
  display: flex;
  justify-content: space-between;
  align-items: center;
  height: 49px;
  padding: 0 32px 0 24px;
  color: #c6c6c6;
}
.nav-group { display: flex; align-items: center; gap: 28px; }
.nav-right { gap: 27px; }
.user { display: flex; align-items: center; gap: 8px; font-size: 16px; margin-right: -7px; }
.user-name { color: #c6c6c6; }

.main {
  background: #424242;
  margin-top: 8px;
  border-radius: 14px;
  padding: 0 12px 28px;
}
.title-row {
  display: flex;
  justify-content: space-between;
  align-items: center;
  padding: 20px 0 15px 8px;
  margin-right: -8px;
}
.workout-title { display: flex; align-items: center; gap: 14px; font-size: 20px; color: #d4d4d4; }
.actions { display: flex; gap: 12px; }
.act {
  width: 40px;
  height: 33px;
  border-radius: 5px;
  display: flex;
  align-items: center;
  justify-content: center;
  color: #fff;
  padding-right: 4px;
}
.act-green { background: #15803d; }
.act-amber { background: #f59e0b; }
.act-red { background: #be123c; width: 38px; padding-right: 0; }

.card {
  background: #272727;
  border-radius: 14px;
  padding: 9px;
  margin-bottom: 8px;
}
.card-map { padding: 9px 10px 12px; }
.map {
  position: relative;
  height: 299px;
  border: 2px solid #000;
  border-radius: 13px;
  overflow: hidden;
  background: #5e5e5e;
}
.map-art { display: block; }
.blob path { stroke-width: 12px; stroke-linejoin: round; }
.blob-light { fill: #616161; stroke: #616161; }
.blob-mid { fill: #565656; stroke: #565656; }
.trees { color: #868686; }
.map-label {
  font-family: "DejaVu Sans", sans-serif;
  font-size: 24px;
  fill: #d0d0d0;
  paint-order: stroke;
  stroke: #555;
  stroke-width: 3px;
}
.map-label-dim { fill: #b8b8b8; font-size: 27px; }
.zoom-ctl {
  position: absolute;
  left: 10px;
  top: 11px;
  width: 33px;
  height: 63px;
  background: #3a3a3a;
  border: 2px solid #747474;
  border-radius: 4px;
  display: flex;
  flex-direction: column;
}
.zoom-btn {
  height: 30px;
  display: flex;
  align-items: center;
  justify-content: center;
  font: 700 22px "Liberation Sans", sans-serif;
  color: #e8e8e8;
  border-bottom: 1px solid #6a6a6a;
}
.zoom-btn-last { border-bottom: 0; }
.layers-ctl {
  position: absolute;
  right: 9px;
  top: 11px;
  width: 47px;
  height: 47px;
  background: #3a3a3a;
  border: 2px solid #747474;
  border-radius: 5px;
  display: flex;
  align-items: center;
  justify-content: center;
}
.scale {
  position: absolute;
  left: 4px;
  bottom: 4px;
  font: 12px/15px "Liberation Sans", sans-serif;
  color: #c8c8c8;
}
.scale-m, .scale-ft {
  background: rgba(50, 50, 50, .7);
  border: 2px solid #999;
  padding-left: 6px;
  height: 17px;
}
.scale-m { width: 83px; border-top: 0; }
.scale-ft { width: 51px; border-bottom: 0; height: 17px; }
.attribution {
  position: absolute;
  right: 0;
  bottom: 0;
  height: 16px;
  padding: 0 5px;
  background: rgba(60, 60, 60, .85);
  display: flex;
  align-items: center;
  gap: 3px;
  font: 12px/16px "Liberation Sans", sans-serif;
  color: #bcbcbc;
}
.socials { display: flex; gap: 6px; margin: 4px 0 0 2px; }
.soc {
  width: 36px;
  height: 36px;
  border-radius: 3px;
  display: flex;
  align-items: center;
  justify-content: center;
  color: #fff;
}
.soc-twitter { background: #1da1f2; }
.soc-mastodon { background: #6364ff; }
.soc-pinterest { background: #bd081c; }
.soc-reddit { background: #ff4500; }
.soc-teams { background: #6264a7; }
.soc-whatsapp { background: #25d366; }
.soc-print { background: #303030; }

table { border-collapse: separate; border-spacing: 0; table-layout: fixed; width: 558px; border: 1px solid #7c7c7c; }
.stats tr:nth-child(odd) { background: #262626; }
.stats tr:nth-child(even) { background: #404040; }
.stats td, .stats th { height: 36px; padding: 0; text-align: left; vertical-align: middle; color: #d4d4d4; }
.stats th { font-weight: 700; color: #c8c8c8; }
.stats td:first-child { padding-left: 8px; color: #eaeaea; }
.c-ic { width: 59.5px; }
.c-label { width: 275.5px; }
.mono { font-family: "Liberation Mono", monospace; font-size: 14px; }
.flag { vertical-align: -1px; margin-right: 1px; }
.type-ic { display: inline-block; vertical-align: -2px; margin-right: 6px; color: #e0e0e0; }

.splits thead tr { background: #18181b; }
.splits thead th {
  height: 36px;
  padding: 0;
  text-align: left;
  font-size: 14px;
  font-weight: 700;
  text-transform: uppercase;
  color: #d4d4d8;
  border-bottom: 1px solid #7c7c7c;
  box-sizing: content-box;
}
.splits tbody td {
  height: 36px;
  padding: 0;
  vertical-align: middle;
  font-family: "Liberation Mono", monospace;
  font-size: 14px;
  color: #d4d4d4;
}
.splits tbody tr:nth-child(odd) { background: #262626; }
.splits tbody tr:nth-child(even) { background: #404040; }
.splits tbody tr.tall td { height: 37px; }
.splits .num { text-align: right; padding-right: 16px; }
.s1 { width: 62.5px; }
.s2 { width: 118px; }
.s3 { width: 122.5px; }
.s4 { width: 114px; }
.arrow { vertical-align: -3px; margin-right: 9px; }
.arrow-up { color: #22c55e; }
.arrow-down { color: #ea580c; }

.card-chart { height: 300px; margin-bottom: 0; }
.chart-title {
  display: flex;
  align-items: center;
  gap: 5px;
  margin: 0;
  height: 45px;
  padding-bottom: 21px;
  font-size: 16px;
  font-weight: 400;
  color: #d4d4d4;
}
.chart-title > svg { color: #ececec; }
.chart-title > svg:first-child { margin-right: 3px; }
.chart { position: relative; z-index: 1; height: 400px; background: #424242; }
.chart svg { display: block; }
.chart text { font-family: "Liberation Sans", sans-serif; font-size: 12px; fill: #d4d4d4; }
.legend text { fill: #e8e8e8; }
.legend text.off { fill: #8a8a8a; }
.y-left text { text-anchor: end; }
.x-labels text { text-anchor: middle; }
.grid path { stroke: #c4c4c4; stroke-width: 1.5; fill: none; }
.elev-area { fill: #c8f665; fill-opacity: .85; stroke: none; }
.elev-line { fill: none; stroke: #c6f45a; stroke-width: 1.5; }
.speed-line { fill: none; stroke: #3fb8ad; stroke-width: 1.8; }
.axis { stroke: #c8c8c8; stroke-width: 1.2; fill: none; }
.hover-ring { fill: none; stroke: #fbe6b6; stroke-width: 2.5; }
.footer {
  margin-top: 8px;
  height: 49px;
  background: #2e2e2e;
  border-radius: 14px 14px 0 0;
}
```
FILE: chart.js
```javascript
(function () {
  var speed = [-294,-226,-301,-265,-218,-258,-241,-254,-265,-233,-203,-78,-32,-214,-60,75,-120,122,123,114,105,-155,-155,-155,93,81,84,108,126,142,143,99,148,145,187,134,147,168,155,172,123,158,133,105,145,120,118,109,145,129,123,118,161,114,90,115,122,82,123,110,111,15,32,81];
  var elev = [180,-111,-85,-190,-118,-54,-105,-40,-137,-56,75,-108,-82,-14,140,100,90,288,226,214,215,205,165,125,12,112,174,237,84,201,130,58,32,41,-56,-141,-132,5,90,79,-29,-54,-105,-35,-7,-10,2,-5,-24,35,-36,-64,95,158,167,420,516,605,557,527,517,546,570,459];
  var BASE = 368;
  function pts(values) {
    return values.map(function (z, i) {
      return [70 + i * 413 / 63, 164 + z / 3];
    });
  }
  function smooth(p, t) {
    var d = "M" + p[0][0].toFixed(1) + " " + p[0][1].toFixed(1);
    for (var i = 0; i < p.length - 1; i++) {
      var a = p[Math.max(i - 1, 0)], b = p[i], c = p[i + 1], e = p[Math.min(i + 2, p.length - 1)];
      var c1x = b[0] + (c[0] - a[0]) * t, c1y = b[1] + (c[1] - a[1]) * t;
      var c2x = c[0] - (e[0] - b[0]) * t, c2y = c[1] - (e[1] - b[1]) * t;
      d += "C" + c1x.toFixed(1) + " " + c1y.toFixed(1) + " " + c2x.toFixed(1) + " " + c2y.toFixed(1) + " " + c[0].toFixed(1) + " " + c[1].toFixed(1);
    }
    return d;
  }
  var e = pts(elev), s = pts(speed);
  var line = smooth(e, 0.12);
  document.getElementById("elev-line").setAttribute("d", line);
  document.getElementById("elev-area").setAttribute("d", line + "L" + e[63][0].toFixed(1) + " " + BASE + "L70 " + BASE + "Z");
  document.getElementById("speed-line").setAttribute("d", smooth(s, 0.06));
  var group = document.getElementById("points");
  e.concat(s).forEach(function (p) {
    var c = document.createElementNS("http://www.w3.org/2000/svg", "circle");
    c.setAttribute("cx", p[0].toFixed(1));
    c.setAttribute("cy", p[1].toFixed(1));
    c.setAttribute("r", "2");
    c.setAttribute("fill", "#ffffff");
    group.appendChild(c);
  });
})();
```
